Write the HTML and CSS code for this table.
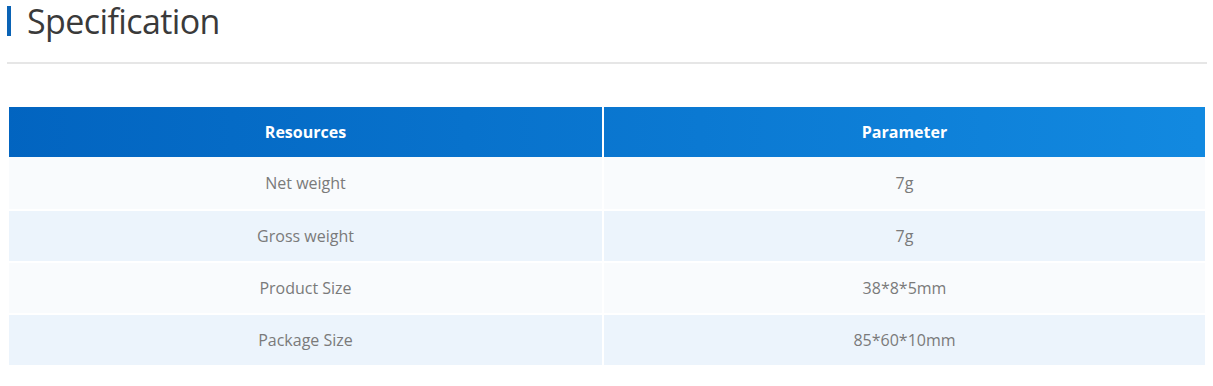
FILE: index.html
```html
<!DOCTYPE html>
<html>
<head>
<meta charset="utf-8">
<link rel="stylesheet" href="styles.css">
</head>
<body>
<div class="page">
  <div class="title-row">
    <span class="title-bar"></span>
    <h2 class="title">Specification</h2>
  </div>
  <div class="divider"></div>
  <table class="spec">
    <thead>
      <tr><th class="c1">Resources</th><th class="c2">Parameter</th></tr>
    </thead>
    <tbody>
      <tr class="odd first"><td>Net weight</td><td>7g</td></tr>
      <tr class="even"><td>Gross weight</td><td>7g</td></tr>
      <tr class="odd"><td>Product Size</td><td>38*8*5mm</td></tr>
      <tr class="even"><td>Package Size</td><td>85*60*10mm</td></tr>
    </tbody>
  </table>
</div>
</body>
</html>
```

FILE: styles.css
```css
html, body {
  margin: 0;
  padding: 0;
  background: #fff;
}
.page {
  width: 1200px;
  padding: 0 6px 0 7px;
  font-family: "Open Sans", "Noto Sans", sans-serif;
}
.title-row {
  display: flex;
  align-items: center;
  height: 42px;
}
.title-bar {
  width: 4px;
  height: 30px;
  background: #0a63b5;
  margin-right: 16px;
}
.title {
  margin: 0;
  font-size: 34px;
  font-weight: 400;
  letter-spacing: -0.6px;
  color: #3a3a3a;
  line-height: 42px;
}
.divider {
  height: 2px;
  background: #e6e6e6;
  margin-top: 20px;
}
.spec {
  margin-top: 43px;
  width: 1200px;
  border-collapse: separate;
  border-spacing: 2px 0;
  font-size: 16px;
}
.spec th, .spec td {
  text-align: center;
  padding: 0;
}
.spec th {
  height: 50px;
  color: #fff;
  font-weight: 700;
  background: linear-gradient(90deg, #0264c0 0px, #0b79d2 700px, #1289e0 1200px);
  background-attachment: fixed;
}
.spec .c1 { width: 593px; }
.spec .c2 { width: 601px; }
.spec td {
  height: 50px;
  color: #7a7a7a;
  border-top: 2px solid #fff;
}
.spec tr.first td {
  border-top: 0;
  height: 52px;
}
.spec tr.odd td { background: #f9fbfd; }
.spec tr.even td { background: #ecf4fc; }
```
